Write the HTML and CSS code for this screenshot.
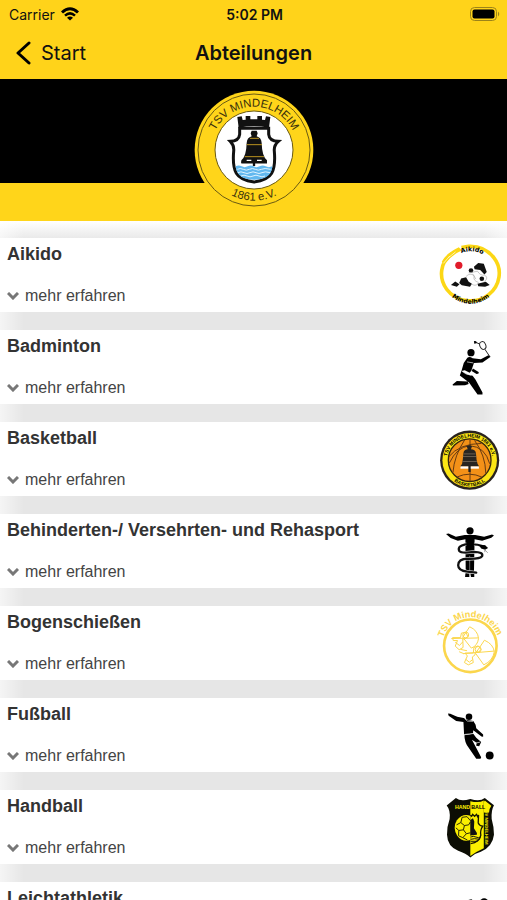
FILE: index.html
```
<!DOCTYPE html>
<html lang="de">
<head>
    <meta charset="UTF-8">
    <meta name="viewport" content="width=device-width, initial-scale=1.0">
    <title>Abteilungen</title>
    <link rel="stylesheet" href="styles.css">
</head>
<body>
    <header class="top">
        <div class="status">
            <div class="carrier">
                <span>Carrier</span>
                <svg width="18" height="14" viewBox="0 0 18 14" fill="none" stroke="#000" stroke-width="3">
                    <path d="M1 5.500Q9-2 17 5.500"/>
                    <path d="M4 8.700Q9 4 14 8.700" stroke-width="2.500"/>
                    <path d="M9 13.500L6 10.700Q9 8.200 12 10.700Z" fill="#000" stroke="none"/>
                </svg>
            </div>
            <div class="time">5:02 PM</div>
            <div class="battery">
                <svg width="30" height="14" viewBox="0 0 30 14">
                    <rect x=".5" y=".5" width="26" height="13" rx="4" fill="none" stroke="#9c8319"/>
                    <rect x="2.500" y="2.500" width="22" height="9" rx="2" fill="#000"/>
                    <path d="M28 4.500Q30.500 7 28 9.500Z" fill="#9c8319"/>
                </svg>
            </div>
        </div>
        <nav class="nav">
            <a href="#" class="back">
                <svg width="15" height="24" viewBox="0 0 15 24" fill="none" stroke="#000" stroke-width="3" stroke-linecap="round" stroke-linejoin="round"><path d="M13 2L2 12L13 22"/></svg>
                Start
            </a>
            <h1>Abteilungen</h1>
        </nav>
    </header>

    <div class="banner">
        <svg class="logo" width="120" height="120" viewBox="0 0 360 360">
            <defs>
                <path id="arcTop" d="M50 180A130 130 0 0 1 310 180"/>
                <path id="arcBottom" d="M28 180A152 152 0 0 0 332 180"/>
            </defs>
            <circle cx="180" cy="180" r="178" fill="#ffd51a"/>
            <circle cx="180" cy="180" r="168" fill="none" stroke="#6a5a13" stroke-width="3"/>
            <circle cx="180" cy="180" r="117" fill="#fff" stroke="#6a5a13" stroke-width="3"/>
            <text class="logo-text"><textPath href="#arcTop" startOffset="50%" text-anchor="middle">TSV MINDELHEIM</textPath></text>
            <text class="logo-text"><textPath href="#arcBottom" startOffset="50%" text-anchor="middle">1861 e.V.</textPath></text>
            <path d="M134 113L130 81L143 79L146 90L155 89V78H169V88H190V78H204V89L213 90L216 79L229 81L225 113Q180 105 134 113Z" fill="#111"/>
            <path d="M137 115V133Q135 153 109 154Q121 166 119 184C117 207 119 236 127 250Q139 271 180 276Q221 271 233 250C241 236 243 207 241 184Q239 166 253 154Q226 153 224 133V115Z" fill="#fff" stroke="#111" stroke-width="9"/>
            <path d="M125 229Q134 224 143 229T161 229T179 229T197 229T215 229T235 229Q233 253 216 262Q180 277 144 262Q127 251 125 229Z" fill="#62b8ef"/>
            <path d="M130 238q9-5 18 0t18 0t18 0t18 0t28 0M132 248q9-5 18 0t18 0t18 0t18 0t24 0M141 258q9-5 18 0t18 0t18 0t18 0" fill="none" stroke="#dff3ff" stroke-width="3"/>
            <path d="M173 122H188L191 130L188 139Q202 143 203 159Q204 199 219 211V219H142V211Q157 199 158 159Q159 143 173 139L170 130Z" fill="#111"/>
            <path d="M168 145H195M158 164H204M152 200H210" stroke="#bb9420" stroke-width="3"/>
            <path d="M142 217H219M180 212V228" stroke="#111" stroke-width="7"/>
            <path d="M158 211H172M189 211H203" stroke="#fff" stroke-width="4"/>
        </svg>
    </div>

    <main class="list">
        <section class="card">
            <div>
                <h2>Aikido</h2>
                <button class="more"><svg class="chevron" viewBox="0 0 12 8"><path d="M1 1L6 6L11 1"/></svg>mehr erfahren</button>
            </div>
            <svg class="icon" viewBox="15 22 210 204">
                <defs>
                    <path id="aikidoTop" d="M50 122A72 72 0 0 1 194 122"/>
                    <path id="aikidoBottom" d="M34 122A88 88 0 0 0 210 122"/>
                </defs>
                <path d="M64 58C30 82 23 131 49 166C77 204 137 214 177 182C212 155 220 104 193 70C174 45 146 34 116 35L94 39" fill="none" stroke="#fcd715" stroke-width="11"/>
                <path d="M34 82Q48 56 86 38L95 48Q65 61 47 85Z" fill="#fcd715"/>
                <path d="M55 69L76 52M39 87L58 65" stroke="#fff" stroke-width="2"/>
                <text class="aikido-text"><textPath href="#aikidoTop" startOffset="52%" text-anchor="middle">Aikido</textPath></text>
                <text class="aikido-text"><textPath href="#aikidoBottom" startOffset="50%" text-anchor="middle">Mindelheim</textPath></text>
                <circle cx="86" cy="93" r="11" fill="#e11b2b"/>
                <path d="M132 97L145 86L162 88L171 113L164 121L151 107L134 105Z" fill="#111"/>
                <circle cx="123" cy="109" r="7" fill="#111"/>
                <path d="M93 133L108 129L116 143L126 149L120 158L95 154L87 147Z" fill="#111"/>
                <path d="M62 153L75 142L88 151L80 158ZM143 149L168 143L180 153L166 158L145 157Z" fill="#111"/>
                <circle cx="156" cy="134" r="7" fill="#111"/>
                <path d="M108 127Q120 114 133 125Q128 140 146 145M116 116L143 111Q150 124 164 123Q179 130 163 143M124 149Q136 159 145 148M128 119L138 135" fill="none" stroke="#aaa" stroke-width="2"/>
            </svg>
        </section>

        <section class="card">
            <div>
                <h2>Badminton</h2>
                <button class="more"><svg class="chevron" viewBox="0 0 12 8"><path d="M1 1L6 6L11 1"/></svg>mehr erfahren</button>
            </div>
            <svg class="icon" viewBox="15 17 210 204">
                <circle cx="123" cy="74" r="11"/>
                <path d="M112 89Q119 85 128 91L153 94L176 82L183 86L158 104L132 105L124 129L119 135L104 127L94 130L101 105Z"/>
                <path d="M129 122L146 133Q149 139 140 139L125 130ZM94 129Q112 143 128 144L137 156L158 195V201H143L117 165L89 143ZM80 160L113 162L116 169L105 173L68 174L67 171Z"/>
                <path d="M111 102L130 105M95 130Q108 142 123 142" fill="none" stroke="#fff" stroke-width="2"/>
                <ellipse cx="159" cy="52" rx="9" ry="12" transform="rotate(-23 159 52)" fill="none" stroke="#222" stroke-width="3"/>
                <path d="M165 63L179 84M137 42L148 47" stroke="#222" stroke-width="3"/>
                <path d="M132 38L139 39L140 45L133 47Z"/>
            </svg>
        </section>

        <section class="card">
            <div>
                <h2>Basketball</h2>
                <button class="more"><svg class="chevron" viewBox="0 0 12 8"><path d="M1 1L6 6L11 1"/></svg>mehr erfahren</button>
            </div>
            <svg class="icon" viewBox="15 16 210 204">
                <defs>
                    <path id="basketTop" d="M49 120A70 70 0 0 1 189 120"/>
                    <path id="basketBottom" d="M39 120A80 80 0 0 0 199 120"/>
                </defs>
                <circle cx="119" cy="120" r="90" fill="#29231f"/>
                <circle cx="119" cy="120" r="83" fill="#fbe514"/>
                <circle cx="119" cy="120" r="65" fill="#f39118" stroke="#33270f" stroke-width="4"/>
                <path d="M55 110Q87 70 155 69M57 129Q80 80 119 76Q166 79 180 131M68 158Q72 106 104 58M168 159Q167 105 134 60M120 57V184M81 171Q119 154 157 172" fill="none" stroke="#653911" stroke-width="3"/>
                <text class="basket-text"><textPath href="#basketTop" startOffset="50%" text-anchor="middle">TSV MINDELHEIM 1861 e.V.</textPath></text>
                <text class="basket-text"><textPath href="#basketBottom" startOffset="50%" text-anchor="middle">BASKETBALL</textPath></text>
                <path d="M110 78Q118 71 126 78L123 87Q136 87 138 98L140 119Q142 133 148 139H90Q98 132 98 119L100 98Q102 87 113 87Z" fill="#282521"/>
                <path d="M101 101H137M98 109H140M97 124H141" stroke="#8b7d69" stroke-width="2"/>
                <path d="M91 139H147V146H91Z" fill="#fff"/>
                <path d="M115 137H122V156H115Z" fill="#222"/>
            </svg>
        </section>

        <section class="card">
            <div>
                <h2>Behinderten-/ Versehrten- und Rehasport</h2>
                <button class="more"><svg class="chevron" viewBox="0 0 12 8"><path d="M1 1L6 6L11 1"/></svg>mehr erfahren</button>
            </div>
            <svg class="icon" viewBox="15 15 210 204">
                <circle cx="120" cy="54" r="11"/>
                <path d="M47 64L55 62L77 72L104 67H136L163 72L187 65L193 68L185 75L157 84L134 80L132 184H107L106 80L83 84L61 76Z"/>
                <path d="M106 184H118V195H105ZM121 184H133V195H123Z"/>
                <path d="M119 130V187" stroke="#999" stroke-width="2"/>
                <path d="M161 101Q137 92 106 95Q81 100 87 115Q94 124 132 118Q161 119 157 131Q151 140 113 139Q84 140 84 159Q84 176 112 178L137 181" fill="none" stroke="#fff" stroke-width="10"/>
                <path d="M164 102Q138 92 106 95Q81 100 87 115Q94 124 132 118Q161 119 157 131Q151 140 113 139Q84 140 84 159Q84 176 112 178L139 181" fill="none" stroke="#111" stroke-width="7" stroke-linecap="round"/>
                <path d="M109 70H132V106H109Z"/>
                <path d="M147 97L166 98L175 106L166 112L154 108Z"/>
                <path d="M164 111L174 121M165 111L165 119" stroke="#777" stroke-width="2"/>
            </svg>
        </section>

        <section class="card">
            <div>
                <h2>Bogenschießen</h2>
                <button class="more"><svg class="chevron" viewBox="0 0 12 8"><path d="M1 1L6 6L11 1"/></svg>mehr erfahren</button>
            </div>
            <svg class="icon" viewBox="15 14 210 204">
                <defs>
                    <path id="bogenTop" d="M35 123A87 87 0 0 1 209 123"/>
                </defs>
                <text class="bogen-text"><textPath href="#bogenTop" startOffset="49%" text-anchor="middle">TSV Mindelheim</textPath></text>
                <g fill="none" stroke="#fbd64c" stroke-width="3">
                    <circle cx="121" cy="123" r="80" stroke-width="8"/>
                    <path d="M119 65Q144 76 146 101Q143 123 124 130M119 65L98 97L124 130M63 101L146 99M164 106Q191 118 194 141Q190 168 162 181M164 106L137 146L162 181M99 147L195 139"/>
                    <path d="M67 98H91L94 84L108 83L113 94L105 102H98L99 128L87 135L75 124L82 107H69ZM105 145H130L132 128L145 123L153 134L147 142H136L135 151L127 157L130 174L115 181L103 174L112 154Z"/>
                    <circle cx="107" cy="90" r="9"/>
                    <circle cx="145" cy="134" r="9"/>
                    <path d="M75 112L88 122L98 111M107 164L118 173L128 165M91 134L111 138M87 141L101 147"/>
                </g>
            </svg>
        </section>

        <section class="card">
            <div>
                <h2>Fußball</h2>
                <button class="more"><svg class="chevron" viewBox="0 0 12 8"><path d="M1 1L6 6L11 1"/></svg>mehr erfahren</button>
            </div>
            <svg class="icon" viewBox="15 13 210 204">
                <circle cx="117" cy="58" r="10"/>
                <path d="M53 48L60 49L81 58L101 62L110 67L130 71L137 82L139 93L160 112V119L155 118L130 99L129 109L102 113L100 74L78 71L55 55Z"/>
                <path d="M103 114L130 110L139 122L154 135L148 148L139 146L140 137L126 128L154 181L152 186H139L115 151Q103 134 103 114Z"/>
                <path d="M104 64L112 71L129 72M102 112L130 109M138 138L151 135" fill="none" stroke="#fff" stroke-width="2"/>
                <circle cx="180" cy="176" r="12"/>
            </svg>
        </section>

        <section class="card">
            <div>
                <h2>Handball</h2>
                <button class="more"><svg class="chevron" viewBox="0 0 12 8"><path d="M1 1L6 6L11 1"/></svg>mehr erfahren</button>
            </div>
            <svg class="icon" viewBox="15 18 210 204">
                <path d="M77 30Q92 43 121 33Q150 43 165 30L193 52Q184 68 186 94Q193 118 193 142Q189 178 153 194Q134 199 121 211Q108 199 84 191Q51 177 50 142Q49 119 58 94Q61 67 49 53Z" fill="#0c0d04"/>
                <path d="M121 40Q148 46 162 38V183Q139 193 121 207Z" fill="#fbef00"/>
                <path d="M162 42L165 38L185 54Q177 65 178 74H162Z" fill="#fbef00"/>
                <text x="74" y="64" class="hand-text hand-left">HAND</text>
                <text x="124" y="64" class="hand-text">BALL</text>
                <text class="hand-side" transform="translate(167 61) rotate(90)">TSV MINDELHEIM</text>
                <path d="M121 84Q96 77 80 98Q66 120 81 145Q97 166 121 158Z" fill="#fbef00"/>
                <path d="M79 112L92 105L103 114L100 127L86 129L77 121M92 105L96 89L111 87M103 114L116 112L121 103M100 127L109 139L121 136M86 129L85 145L98 151L109 139M111 87L121 99M98 151L112 158" fill="none" stroke="#292608" stroke-width="3"/>
                <path d="M121 83L125 86L128 80L134 86L140 80L143 87L146 82L145 106Q149 115 159 116Q150 129 153 143Q149 165 122 169" fill="none" stroke="#151300" stroke-width="4"/>
                <path d="M121 97L129 92L133 102L132 122L141 137V142L121 144Z" fill="#111"/>
                <path d="M122 149Q130 145 138 149T153 149M122 156Q132 152 149 156M122 162H143" fill="none" stroke="#111" stroke-width="3"/>
            </svg>
        </section>

        <section class="card">
            <div>
                <h2>Leichtathletik</h2>
                <button class="more"><svg class="chevron" viewBox="0 0 12 8"><path d="M1 1L6 6L11 1"/></svg>mehr erfahren</button>
            </div>
            <svg class="icon" viewBox="15 18 210 204">
                <circle cx="163" cy="68" r="13"/>
                <path d="M115 61L124 58L146 73L158 85L150 112L172 134L165 164L155 160L158 138L130 118L105 143L78 145V137L98 134L124 105L135 84L117 82L103 98L96 92L113 73ZM155 91L168 105L187 98L190 105L166 115L151 103Z"/>
            </svg>
        </section>
    </main>
</body>
</html>
```
FILE: styles.css
```
*{
    margin: 0;
    padding: 0;
    box-sizing: border-box;
}
body{
    background-color: #fff;
    color: #333;
    font-family: "Liberation Sans", Arial, sans-serif;
}

/* header */
.top{
    background-color: #ffd31a;
    color: #111;
    font-family: Inter, sans-serif;
}
.status{
    display: grid;
    grid-template-columns: 1fr auto 1fr;
    align-items: center;
    height: 28px;
    padding: 0 7px 0 9px;
    font-size: 14px;
}
.carrier{
    display: flex;
    align-items: center;
    gap: 6px;
}
.time{
    font-weight: 600;
}
.battery{
    display: flex;
    justify-content: flex-end;
}
.nav{
    display: grid;
    grid-template-columns: 1fr auto 1fr;
    align-items: center;
    height: 51px;
    padding: 0 16px 2px;
}
.nav h1{
    font-size: 20px;
    font-weight: 600;
}
.back{
    display: flex;
    align-items: center;
    gap: 10px;
    color: #111;
    font-size: 20px;
    text-decoration: none;
}

/* club banner */
.banner{
    display: flex;
    justify-content: center;
    padding: 11px 0;
    background: linear-gradient(#000 104px, #ffd51a 104px);
}
.logo{
    display: block;
}
.logo-text{
    font-size: 34px;
    fill: #3a310c;
}

/* list, the grey between the cards fades out at the top and the sides */
.list{
    display: flex;
    flex-direction: column;
    gap: 18px;
    padding-top: 17px;
    background:
        linear-gradient(90deg, rgba(255, 255, 255, 0.6), transparent 24px, transparent calc(100% - 24px), rgba(255, 255, 255, 0.6)),
        linear-gradient(#fff, #e6e6e6 20px);
}
.card{
    display: flex;
    justify-content: space-between;
    padding: 4px 2px 3px 7px;
    background-color: #fff;
}
.card h2{
    margin-bottom: 20px;
    font-size: 18px;
    line-height: 24px;
}
.more{
    display: flex;
    align-items: center;
    gap: 6px;
    border: none;
    background: none;
    color: #444;
    font-family: inherit;
    font-size: 16px;
    line-height: 20px;
    cursor: pointer;
}
.chevron{
    width: 12px;
    height: 8px;
    fill: none;
    stroke: #777;
    stroke-width: 3;
}
.icon{
    flex: none;
    width: 70px;
    height: 67px;
    overflow: visible;
}

/* lettering in the badges */
.aikido-text{
    font-family: "DejaVu Sans", sans-serif;
    font-size: 19px;
    font-weight: bold;
}
.basket-text{
    font-size: 15px;
    font-weight: bold;
}
.bogen-text{
    font-size: 28px;
    font-weight: bold;
    fill: #fbd64c;
}
.hand-text{
    font-size: 16px;
    font-weight: bold;
}
.hand-left{
    fill: #fbef00;
}
.hand-side{
    font-size: 13px;
    font-weight: bold;
    fill: #fbef00;
}
```
